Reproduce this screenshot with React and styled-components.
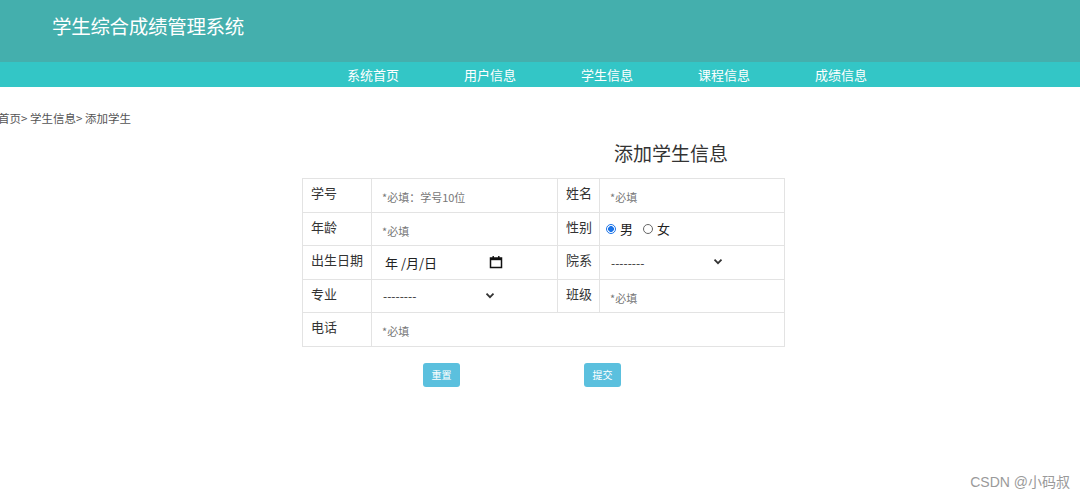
import React from 'react';
import styled, { createGlobalStyle } from 'styled-components';

const FONT = '"Noto Sans CJK SC", "Noto Sans", "Liberation Sans", sans-serif';

const GlobalStyle = createGlobalStyle`
  html, body {
    margin: 0;
    padding: 0;
    background: #fff;
    font-family: ${FONT};
  }
  #root {
    position: relative;
    min-height: 100vh;
    overflow: hidden;
  }
`;

const NAV_ITEMS = ['系统首页', '用户信息', '学生信息', '课程信息', '成绩信息'];

const CalendarIcon = () => (
  <svg width="14" height="14" viewBox="0 0 14 14">
    <rect x="1.5" y="3" width="11" height="9.5" fill="none" stroke="#111" strokeWidth="1.5" />
    <rect x="1.5" y="3" width="11" height="2.2" fill="#111" />
    <rect x="3.5" y="1" width="1.4" height="2.5" fill="#111" />
    <rect x="9.1" y="1" width="1.4" height="2.5" fill="#111" />
  </svg>
);

const Chevron = () => (
  <svg width="10" height="7" viewBox="0 0 10 7">
    <path d="M1.5 1.5 L5 5 L8.5 1.5" fill="none" stroke="#333" strokeWidth="1.8" />
  </svg>
);

const Select = () => (
  <SelectWrap>
    <SelectBox defaultValue="">
      <option value="">--------</option>
    </SelectBox>
    <ChevronSlot>
      <Chevron />
    </ChevronSlot>
  </SelectWrap>
);

const App = () => {
  return (
    <>
      <GlobalStyle />
      <Header>
        <Title>学生综合成绩管理系统</Title>
      </Header>
      <Nav>
        {NAV_ITEMS.map((item) => (
          <NavItem key={item}>{item}</NavItem>
        ))}
      </Nav>
      <Main>
        <Crumb>首页&gt; 学生信息&gt; 添加学生</Crumb>
        <Heading>添加学生信息</Heading>
        <FormTable>
          <colgroup>
            <col style={{ width: 69 }} />
            <col style={{ width: 186 }} />
            <col style={{ width: 42 }} />
            <col style={{ width: 185 }} />
          </colgroup>
          <tbody>
            <tr>
              <Label>学号</Label>
              <Cell><Field placeholder="*必填：学号10位" /></Cell>
              <Label>姓名</Label>
              <Cell><Field placeholder="*必填" /></Cell>
            </tr>
            <tr>
              <Label>年龄</Label>
              <Cell><Field placeholder="*必填" /></Cell>
              <Label>性别</Label>
              <Cell>
                <RadioGroup>
                  <RadioLabel>
                    <Radio $checked />男
                  </RadioLabel>
                  <RadioLabel>
                    <Radio />女
                  </RadioLabel>
                </RadioGroup>
              </Cell>
            </tr>
            <tr>
              <Label>出生日期</Label>
              <Cell>
                <DateBox>
                  <span>年 /月/日</span>
                  <CalendarIcon />
                </DateBox>
              </Cell>
              <Label>院系</Label>
              <Cell><Select /></Cell>
            </tr>
            <tr>
              <Label>专业</Label>
              <Cell><Select /></Cell>
              <Label>班级</Label>
              <Cell><Field placeholder="*必填" /></Cell>
            </tr>
            <tr>
              <Label>电话</Label>
              <Cell colSpan={3}><Field placeholder="*必填" /></Cell>
            </tr>
          </tbody>
        </FormTable>
        <Actions>
          <Button>重置</Button>
          <Button>提交</Button>
        </Actions>
      </Main>
      <Watermark>CSDN @小码叔</Watermark>
    </>
  );
};

export default App;

const Header = styled.div`
  height: 62px;
  background: #44afad;
  display: flex;
  align-items: flex-start;
  padding-left: 52px;
  box-sizing: border-box;
`;

const Title = styled.h1`
  margin: 12px 0 0;
  font-size: 19.5px;
  font-weight: 400;
  line-height: 28px;
  color: #fff;
  letter-spacing: -0.3px;
`;

const Nav = styled.div`
  height: 25px;
  background: #33c6c6;
  display: flex;
  align-items: center;
  gap: 65px;
  padding-left: 347px;
`;

const NavItem = styled.a`
  width: 52px;
  font-size: 13px;
  line-height: 25px;
  color: #fff;
  white-space: nowrap;
  cursor: pointer;
`;

const Main = styled.div`
  display: flex;
  flex-direction: column;
  padding-top: 22px;
`;

const Crumb = styled.div`
  margin-left: -2px;
  font-size: 11.5px;
  line-height: 18px;
  color: #555;
`;

const Heading = styled.h2`
  margin: 12px 0 0 614px;
  font-size: 19px;
  line-height: 28px;
  font-weight: 400;
  color: #333;
`;

const FormTable = styled.table`
  margin: 11px 0 0 302px;
  width: 482px;
  border-collapse: collapse;
  table-layout: fixed;
`;

const Label = styled.td`
  height: 33.5px;
  padding: 0 0 5px 8px;
  border: 1px solid #e3e3e3;
  font-size: 13px;
  color: #333;
  white-space: nowrap;
  box-sizing: border-box;
`;

const Cell = styled.td`
  height: 33.5px;
  padding: 0 0 0 8px;
  border: 1px solid #e3e3e3;
  box-sizing: border-box;
`;

const Field = styled.input`
  border: none;
  outline: none;
  width: 160px;
  padding: 0 2px;
  font-family: ${FONT};
  font-size: 11px;
  color: #333;
  background: transparent;
  &::placeholder {
    color: #777;
  }
`;

const RadioGroup = styled.div`
  display: flex;
  align-items: center;
  gap: 10px;
  margin-left: -2px;
`;

const RadioLabel = styled.label`
  display: flex;
  align-items: center;
  gap: 4px;
  font-size: 13px;
  color: #222;
`;

const Radio = styled.span`
  width: 10px;
  height: 10px;
  border-radius: 50%;
  box-sizing: border-box;
  border: 1px solid ${(p) => (p.$checked ? '#1a73e8' : '#666')};
  background: ${(p) => (p.$checked ? 'radial-gradient(circle, #1a73e8 0 2.6px, #fff 3.2px)' : '#fff')};
`;

const DateBox = styled.div`
  display: flex;
  align-items: center;
  justify-content: space-between;
  width: 118px;
  padding: 0 0 0 5px;
  font-size: 13px;
  color: #222;
  white-space: pre;
`;

const SelectWrap = styled.div`
  position: relative;
  width: 118px;
  display: flex;
  align-items: center;
`;

const SelectBox = styled.select`
  appearance: none;
  border: none;
  outline: none;
  background: transparent;
  width: 100%;
  padding: 0 0 0 3px;
  font-family: ${FONT};
  font-size: 12px;
  color: #333;
`;

const ChevronSlot = styled.span`
  position: absolute;
  right: 3px;
  top: 50%;
  transform: translateY(-55%);
  display: flex;
  pointer-events: none;
`;

const Actions = styled.div`
  display: flex;
  gap: 124px;
  margin: 16px 0 0 423px;
`;

const Button = styled.button`
  width: 37px;
  height: 24px;
  padding: 0;
  border: none;
  border-radius: 3px;
  background: #5bc0de;
  color: #fff;
  font-family: ${FONT};
  font-size: 10px;
  cursor: pointer;
`;

const Watermark = styled.div`
  position: absolute;
  right: 10px;
  bottom: 8px;
  font-family: "Liberation Sans", "Noto Sans CJK SC", sans-serif;
  font-size: 14px;
  color: #9a9a9a;
`;
